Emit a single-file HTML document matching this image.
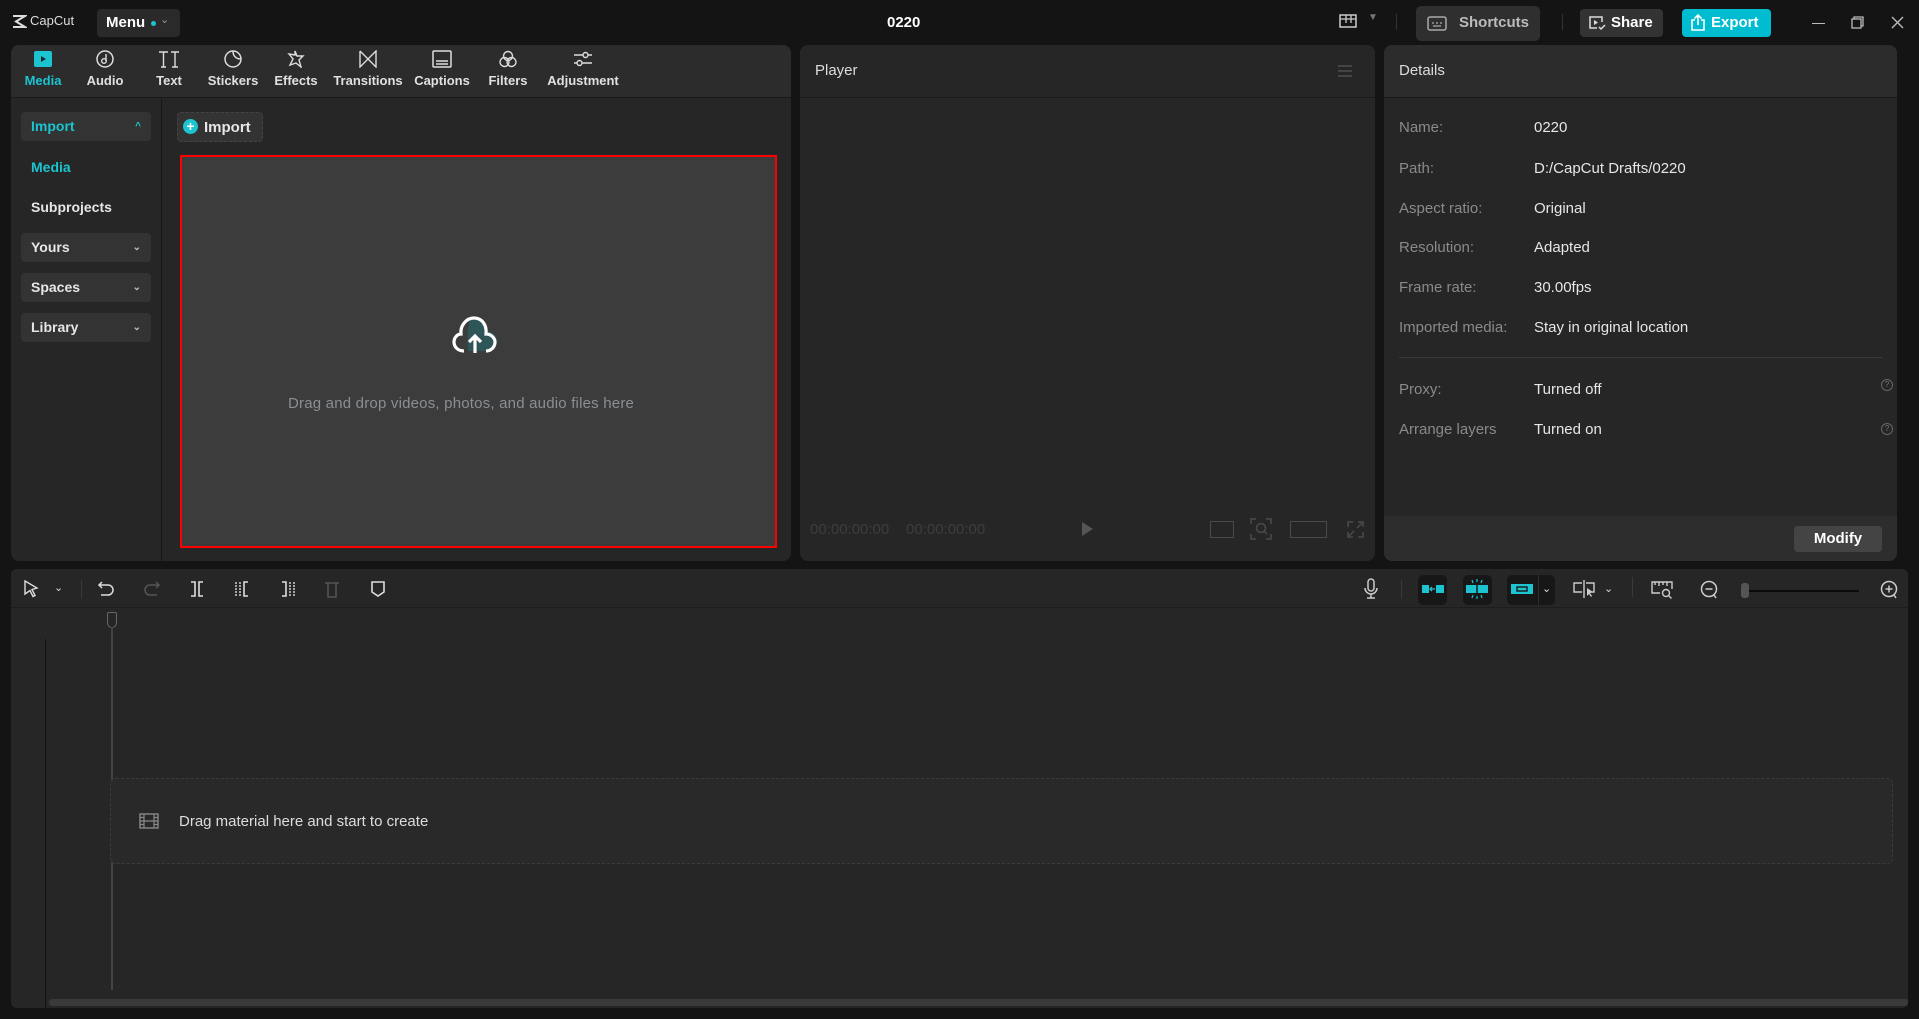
<!DOCTYPE html>
<html><head><meta charset="utf-8"><style>
*{margin:0;padding:0;box-sizing:border-box}
body{width:1919px;height:1019px;background:#141414;font-family:"Liberation Sans",sans-serif;position:relative;overflow:hidden;color:#e6e6e6}
.a{position:absolute}
.panel{position:absolute;background:#262626;border-radius:8px;overflow:hidden}
.t{position:absolute;white-space:nowrap}
.tab{position:absolute;top:50px;width:70px;margin-left:-35px;text-align:center;font-size:13px;font-weight:bold;color:#e0e0e0}
.tab svg{display:block;margin:0 auto 5px}
.sb{position:absolute;left:21px;width:130px;height:29px;background:#333;border-radius:4px;font-size:14px;font-weight:bold;padding-left:10px;line-height:29px;color:#e6e6e6}
.sb .c{position:absolute;right:10px;top:0;font-size:10px;color:#bbb}
.lab{position:absolute;left:1399px;font-size:15px;color:#8a8a8a}
.val{position:absolute;left:1534px;font-size:15px;color:#e6e6e6}
</style></head><body>

<!-- top bar -->
<svg class="a" style="left:12px;top:15px" width="15" height="13" viewBox="0 0 15 13"><path d="M1 1h12L4 6.5 13 12H1" fill="none" stroke="#ddd" stroke-width="2"/></svg>
<div class="t" style="left:30px;top:13px;font-size:13px;color:#ddd">CapCut</div>
<div class="a" style="left:97px;top:9px;width:83px;height:28px;background:#2a2a2a;border-radius:4px"></div>
<div class="t" style="left:106px;top:14px;font-size:15px;font-weight:bold;color:#fff">Menu</div>
<div class="a" style="left:151px;top:21px;width:5px;height:5px;border-radius:50%;background:#1bc4d0"></div>
<div class="t" style="left:160px;top:13px;font-size:11px;color:#999">⌄</div>
<div class="t" style="left:887px;top:14px;font-size:15px;font-weight:bold;color:#fff">0220</div>
<svg class="a" style="left:1339px;top:14px" width="18" height="16"><rect x="1" y="1" width="16" height="12" fill="none" stroke="#ccc" stroke-width="1.5"/><path d="M1 5h16M7 1v8M12 1v8" stroke="#ccc" stroke-width="1.3"/></svg>
<div class="t" style="left:1368px;top:12px;font-size:10px;color:#777">▼</div>
<div class="a" style="left:1396px;top:14px;width:1px;height:16px;background:#333"></div>
<div class="a" style="left:1416px;top:6px;width:124px;height:35px;background:#2f2f2f;border-radius:5px"></div>
<svg class="a" style="left:1427px;top:16px" width="20" height="15"><rect x="1" y="1" width="18" height="13" rx="2" fill="none" stroke="#aaa" stroke-width="1.5"/><path d="M5 7h2M9 7h2M13 7h2M6 10h8" stroke="#aaa" stroke-width="1.3"/></svg>
<div class="t" style="left:1459px;top:14px;font-size:15px;font-weight:bold;color:#bbb">Shortcuts</div>
<div class="a" style="left:1562px;top:14px;width:1px;height:16px;background:#333"></div>
<div class="a" style="left:1580px;top:9px;width:83px;height:28px;background:#333;border-radius:4px"></div>
<svg class="a" style="left:1588px;top:15px" width="18" height="16"><path d="M14 7V2H2v11h7" fill="none" stroke="#ddd" stroke-width="1.5"/><path d="M6 5l4 2.5L6 10z" fill="#ddd"/><path d="M11 12l2 2 4-4" fill="none" stroke="#ddd" stroke-width="1.5"/></svg>
<div class="t" style="left:1611px;top:14px;font-size:15px;font-weight:bold;color:#fff">Share</div>
<div class="a" style="left:1682px;top:9px;width:89px;height:28px;background:#00bcd0;border-radius:4px"></div>
<svg class="a" style="left:1690px;top:13px" width="16" height="19"><path d="M5 7H2v10h12V7h-3M8 12V2M4.5 5.5L8 2l3.5 3.5" fill="none" stroke="#fff" stroke-width="1.6"/></svg>
<div class="t" style="left:1711px;top:14px;font-size:15px;font-weight:bold;color:#fff">Export</div>
<div class="a" style="left:1812px;top:23px;width:13px;height:1px;background:#bbb"></div>
<svg class="a" style="left:1851px;top:16px" width="13" height="13"><rect x="1" y="3" width="9" height="9" fill="none" stroke="#bbb" stroke-width="1.3"/><path d="M3 3V1h9v9h-2" fill="none" stroke="#bbb" stroke-width="1.3"/></svg>
<svg class="a" style="left:1891px;top:16px" width="13" height="13"><path d="M1 1l11 11M12 1L1 12" stroke="#bbb" stroke-width="1.4"/></svg>

<!-- left media panel -->
<div class="panel" style="left:11px;top:45px;width:780px;height:516px">
 <div class="a" style="left:0;top:0;width:780px;height:53px;background:#2c2c2c;border-bottom:1px solid #1a1a1a"></div>
 <div class="a" style="left:150px;top:54px;width:1px;height:462px;background:#151515"></div>
</div>
<div class="tab" style="left:43px;color:#1bc4d0"><svg width="22" height="18"><rect x="2" y="1" width="18" height="16" rx="2" fill="#1bc4d0"/><path d="M9 6l5 3-5 3z" fill="#1b2b2e"/></svg>Media</div>
<div class="tab" style="left:105px"><svg width="22" height="18"><circle cx="11" cy="9" r="8" fill="none" stroke="#ddd" stroke-width="1.5"/><circle cx="10" cy="11" r="2.3" fill="none" stroke="#ddd" stroke-width="1.4"/><path d="M12 11V4" stroke="#ddd" stroke-width="1.4"/></svg>Audio</div>
<div class="tab" style="left:169px"><svg width="22" height="18"><path d="M1 2h9M5.5 2v15M13 2h8M17 2v15M14 17h6M3 17h5" stroke="#ddd" stroke-width="1.4" fill="none"/></svg>Text</div>
<div class="tab" style="left:233px"><svg width="22" height="18"><path d="M11 1a8 8 0 1 0 8 8 8 8 0 0 0-8-8zM11 1c0 5 3 8 8 8" fill="none" stroke="#ddd" stroke-width="1.5"/></svg>Stickers</div>
<div class="tab" style="left:296px"><svg width="22" height="18"><path d="M10 1l2 5 6 0-4 4 2 7-5-4-6 2 3-6-4-5 6 1z" fill="none" stroke="#ddd" stroke-width="1.4"/></svg>Effects</div>
<div class="tab" style="left:368px"><svg width="22" height="18"><path d="M3 1v16L19 1v16L3 1" fill="none" stroke="#ddd" stroke-width="1.4"/></svg>Transitions</div>
<div class="tab" style="left:442px"><svg width="22" height="18"><rect x="2" y="1" width="18" height="16" rx="1" fill="none" stroke="#ddd" stroke-width="1.5"/><path d="M5 11h12M5 14h12" stroke="#ddd" stroke-width="1.5"/></svg>Captions</div>
<div class="tab" style="left:508px"><svg width="22" height="18"><circle cx="11" cy="6" r="4.5" fill="none" stroke="#ddd" stroke-width="1.4"/><circle cx="7.5" cy="12" r="4.5" fill="none" stroke="#ddd" stroke-width="1.4"/><circle cx="14.5" cy="12" r="4.5" fill="none" stroke="#ddd" stroke-width="1.4"/></svg>Filters</div>
<div class="tab" style="left:583px;width:80px;margin-left:-40px"><svg width="22" height="18"><path d="M2 5h9M16 5h4M2 13h3M10 13h10" stroke="#ddd" stroke-width="1.4"/><circle cx="13.5" cy="5" r="2.5" fill="none" stroke="#ddd" stroke-width="1.4"/><circle cx="7.5" cy="13" r="2.5" fill="none" stroke="#ddd" stroke-width="1.4"/></svg>Adjustment</div>

<div class="sb" style="top:112px;color:#1bc4d0">Import<span class="c" style="color:#1bc4d0">^</span></div>
<div class="t" style="left:31px;top:159px;font-size:14px;font-weight:bold;color:#1bc4d0">Media</div>
<div class="t" style="left:31px;top:199px;font-size:14px;font-weight:bold;color:#e6e6e6">Subprojects</div>
<div class="sb" style="top:233px">Yours<span class="c">⌄</span></div>
<div class="sb" style="top:273px">Spaces<span class="c">⌄</span></div>
<div class="sb" style="top:313px">Library<span class="c">⌄</span></div>

<div class="a" style="left:177px;top:112px;width:86px;height:30px;background:#333;border-radius:4px;border:1px dashed #444"></div>
<div class="a" style="left:183px;top:119px;width:15px;height:15px;border-radius:50%;background:#1bc4d0;color:#fff;font-size:14px;line-height:14px;text-align:center;font-weight:bold">+</div>
<div class="t" style="left:204px;top:119px;font-size:15px;font-weight:bold;color:#e6e6e6">Import</div>

<div class="a" style="left:180px;top:155px;width:597px;height:393px;background:#3c3c3c;border:2px solid #f00"></div>
<svg class="a" style="left:450px;top:314px" width="52" height="46" viewBox="0 0 52 46">
 <path d="M20 6c4-3 11-3 14 1 3 4 3 8 2 10 7 0 11 4 11 10s-5 10-11 10H18c0-7-2-18 2-31z" fill="#2e5558"/>
 <path d="M14 37c-6 0-10-4-10-9 0-4 3-8 7-8-1-8 5-16 13-16s13 7 12 16c5 0 9 4 9 8 0 5-4 9-9 9" fill="none" stroke="#fff" stroke-width="3.2"/>
 <path d="M25 39V22M19 28l6-6 6 6" fill="none" stroke="#fff" stroke-width="3.2"/>
</svg>
<div class="t" style="left:288px;top:395px;font-size:15px;color:#8a8f93;letter-spacing:0.2px">Drag and drop videos, photos, and audio files here</div>

<!-- player -->
<div class="panel" style="left:800px;top:45px;width:575px;height:516px">
 <div class="a" style="left:0;top:0;width:575px;height:53px;background:#262626;border-bottom:1px solid #1a1a1a"></div>
</div>
<div class="t" style="left:815px;top:62px;font-size:15px;color:#ddd">Player</div>
<div class="a" style="left:1338px;top:65px;width:14px;height:2px;background:#444;box-shadow:0 5px 0 #444,0 10px 0 #444"></div>
<div class="t" style="left:810px;top:521px;font-size:15px;color:#3d3d3d">00:00:00:00</div>
<div class="t" style="left:906px;top:521px;font-size:15px;color:#3d3d3d">00:00:00:00</div>
<div class="a" style="left:1082px;top:522px;width:0;height:0;border-left:11px solid #555;border-top:7px solid transparent;border-bottom:7px solid transparent"></div>
<div class="a" style="left:1210px;top:521px;width:24px;height:17px;border:1.5px solid #4a4a4a"></div>
<svg class="a" style="left:1250px;top:518px" width="22" height="22"><path d="M1 6V1h5M16 1h5v5M21 16v5h-5M6 21H1v-5" fill="none" stroke="#4a4a4a" stroke-width="1.6"/><circle cx="11" cy="10" r="4.5" fill="none" stroke="#4a4a4a" stroke-width="1.5"/><path d="M14 13l3 3" stroke="#4a4a4a" stroke-width="1.5"/></svg>
<div class="a" style="left:1290px;top:521px;width:37px;height:17px;border:1.5px solid #4a4a4a"></div>
<svg class="a" style="left:1347px;top:521px" width="17" height="17"><path d="M1 6V1h5M11 1h5v5M16 11v5h-5M6 16H1v-5M2 15l5-5M15 2l-5 5" fill="none" stroke="#4a4a4a" stroke-width="1.5"/></svg>

<!-- details -->
<div class="panel" style="left:1384px;top:45px;width:513px;height:516px">
 <div class="a" style="left:0;top:0;width:513px;height:53px;background:#2c2c2c;border-bottom:1px solid #1a1a1a"></div>
 <div class="a" style="left:15px;top:312px;width:483px;height:1px;background:#3a3a3a"></div>
 <div class="a" style="left:0;top:471px;width:513px;height:45px;background:#2d2d2d"></div>
 <div class="a" style="left:410px;top:481px;width:88px;height:26px;background:#444;border-radius:4px;color:#fff;font-weight:bold;font-size:15px;text-align:center;line-height:26px">Modify</div>
</div>
<div class="t" style="left:1399px;top:62px;font-size:15px;color:#ddd">Details</div>
<div class="lab" style="top:119px">Name:</div><div class="val" style="top:119px">0220</div>
<div class="lab" style="top:160px">Path:</div><div class="val" style="top:160px">D:/CapCut Drafts/0220</div>
<div class="lab" style="top:200px">Aspect ratio:</div><div class="val" style="top:200px">Original</div>
<div class="lab" style="top:239px">Resolution:</div><div class="val" style="top:239px">Adapted</div>
<div class="lab" style="top:279px">Frame rate:</div><div class="val" style="top:279px">30.00fps</div>
<div class="lab" style="top:319px">Imported media:</div><div class="val" style="top:319px">Stay in original location</div>
<div class="lab" style="top:381px">Proxy:</div><div class="val" style="top:381px">Turned off</div>
<div class="lab" style="top:421px">Arrange layers</div><div class="val" style="top:421px">Turned on</div>
<div class="a" style="left:1881px;top:379px;width:12px;height:12px;border:1px solid #666;border-radius:50%;font-size:8px;color:#777;text-align:center;line-height:10px">?</div>
<div class="a" style="left:1881px;top:423px;width:12px;height:12px;border:1px solid #666;border-radius:50%;font-size:8px;color:#777;text-align:center;line-height:10px">?</div>

<!-- timeline -->
<div class="panel" style="left:11px;top:569px;width:1897px;height:439px;border-radius:6px">
 <div class="a" style="left:0;top:0;width:1897px;height:39px;background:#262626;border-bottom:1px solid #1d1d1d"></div>
 <div class="a" style="left:34px;top:70px;width:1px;height:369px;background:#111"></div>
 <div class="a" style="left:96px;top:43px;width:10px;height:16px;border:1.5px solid #666;border-radius:2px 2px 5px 5px"></div>
 <div class="a" style="left:100px;top:58px;width:2px;height:363px;background:#444"></div>
 <div class="a" style="left:99px;top:209px;width:1783px;height:86px;border:1px dashed #3b3b3b;border-radius:6px;background:#292929"></div>
 <div class="a" style="left:38px;top:430px;width:1860px;height:7px;background:#3a3a3a;border-radius:4px"></div>
</div>
<svg class="a" style="left:139px;top:813px" width="20" height="16"><rect x="1" y="1" width="18" height="14" fill="none" stroke="#888" stroke-width="1.4"/><path d="M5 1v14M15 1v14M1 8h18M1 4.5h4M1 11.5h4M15 4.5h4M15 11.5h4" stroke="#888" stroke-width="1.2"/></svg>
<div class="t" style="left:179px;top:813px;font-size:15px;color:#ddd">Drag material here and start to create</div>

<!-- timeline toolbar icons -->
<svg class="a" style="left:23px;top:580px" width="16" height="19"><path d="M2 1l12 7-5 1.5 3 6-2 1-3-6L2 14z" fill="none" stroke="#ddd" stroke-width="1.4"/></svg>
<div class="t" style="left:54px;top:581px;font-size:11px;color:#ddd">⌄</div>
<div class="a" style="left:81px;top:580px;width:1px;height:19px;background:#3a3a3a"></div>
<svg class="a" style="left:97px;top:581px" width="18" height="16"><path d="M5 1L2 4l3 3M2 4h9a5 5 0 0 1 0 10H4" fill="none" stroke="#ddd" stroke-width="1.5"/></svg>
<svg class="a" style="left:143px;top:581px" width="18" height="16"><path d="M13 1l3 3-3 3M16 4H7a5 5 0 0 0 0 10h7" fill="none" stroke="#555" stroke-width="1.5"/></svg>
<svg class="a" style="left:189px;top:581px" width="16" height="16"><path d="M2 1h4v14H2M14 1h-4v14h4" fill="none" stroke="#ddd" stroke-width="1.6"/></svg>
<svg class="a" style="left:234px;top:581px" width="16" height="16"><path d="M2 1v14M6 1v14" stroke="#ddd" stroke-width="1.4" stroke-dasharray="2 1"/><path d="M14 1h-4v14h4" fill="none" stroke="#ddd" stroke-width="1.6"/></svg>
<svg class="a" style="left:280px;top:581px" width="16" height="16"><path d="M2 1h4v14H2" fill="none" stroke="#ddd" stroke-width="1.6"/><path d="M10 1v14M14 1v14" stroke="#ddd" stroke-width="1.4" stroke-dasharray="2 1"/></svg>
<svg class="a" style="left:324px;top:580px" width="16" height="18"><path d="M1 3h14M4 3v14h8V3" fill="none" stroke="#555" stroke-width="1.5"/></svg>
<svg class="a" style="left:370px;top:580px" width="16" height="18"><path d="M2 2h12v10l-6 4-6-4z" fill="none" stroke="#ddd" stroke-width="1.6"/></svg>

<svg class="a" style="left:1364px;top:578px" width="14" height="22"><rect x="4" y="1" width="6" height="12" rx="3" fill="none" stroke="#ccc" stroke-width="1.5"/><path d="M1 10a6 6 0 0 0 12 0M7 16v4M3 20h8" fill="none" stroke="#ccc" stroke-width="1.5"/></svg>
<div class="a" style="left:1401px;top:580px;width:1px;height:19px;background:#3a3a3a"></div>
<div class="a" style="left:1418px;top:575px;width:29px;height:30px;background:#171717;border-radius:5px"></div>
<svg class="a" style="left:1421px;top:583px" width="24" height="12"><rect x="1" y="2" width="7" height="8" fill="#1bc4d0"/><rect x="15" y="2" width="8" height="8" fill="#1bc4d0"/><path d="M9 6h5M11 4l-2 2 2 2" stroke="#1bc4d0" stroke-width="1.3" fill="none"/></svg>
<div class="a" style="left:1463px;top:575px;width:29px;height:30px;background:#171717;border-radius:5px"></div>
<svg class="a" style="left:1465px;top:578px" width="24" height="22"><rect x="1" y="7" width="22" height="8" fill="#1bc4d0"/><path d="M12 7v8" stroke="#171717" stroke-width="1.5"/><path d="M12 1v3M7 2l1 3M17 2l-1 3M12 18v3M7 20l1-3M17 20l-1-3" stroke="#1bc4d0" stroke-width="1.2"/></svg>
<div class="a" style="left:1507px;top:575px;width:48px;height:30px;background:#171717;border-radius:5px"></div>
<div class="a" style="left:1538px;top:575px;width:1px;height:30px;background:#2e2e2e"></div>
<svg class="a" style="left:1510px;top:583px" width="24" height="12"><rect x="1" y="1" width="22" height="10" fill="#1bc4d0"/><rect x="7" y="4" width="10" height="4" fill="none" stroke="#171717" stroke-width="1.4"/></svg>
<div class="t" style="left:1542px;top:582px;font-size:11px;color:#ddd">⌄</div>
<svg class="a" style="left:1572px;top:579px" width="24" height="20"><path d="M12 1v18M10 4H2v9h8M14 4h8v9h-5" fill="none" stroke="#ccc" stroke-width="1.4"/><path d="M15 9l6 4-3 1 2 3-1 1-2-3-2 2z" fill="#ccc"/></svg>
<div class="t" style="left:1604px;top:582px;font-size:11px;color:#ddd">⌄</div>
<div class="a" style="left:1632px;top:577px;width:1px;height:20px;background:#3a3a3a"></div>
<svg class="a" style="left:1651px;top:580px" width="22" height="19"><path d="M9 13H1V2h20v7M4 2v3M8 2v4M12 2v3M16 2v4" fill="none" stroke="#ccc" stroke-width="1.4"/><circle cx="15" cy="13" r="3.5" fill="none" stroke="#ccc" stroke-width="1.4"/><path d="M17.5 15.5l3 3" stroke="#ccc" stroke-width="1.4"/></svg>
<svg class="a" style="left:1700px;top:580px" width="18" height="19"><circle cx="9" cy="9" r="7.5" fill="none" stroke="#ccc" stroke-width="1.5"/><path d="M5.5 9h7M14 15l2 3" stroke="#ccc" stroke-width="1.5"/></svg>
<div class="a" style="left:1744px;top:590px;width:115px;height:2px;background:#0a0a0a"></div>
<div class="a" style="left:1741px;top:583px;width:8px;height:15px;background:#555;border-radius:3px"></div>
<svg class="a" style="left:1880px;top:580px" width="18" height="19"><circle cx="9" cy="9" r="7.5" fill="none" stroke="#ccc" stroke-width="1.5"/><path d="M5.5 9h7M9 5.5v7M14 15l2 3" stroke="#ccc" stroke-width="1.5"/></svg>

</body></html>
